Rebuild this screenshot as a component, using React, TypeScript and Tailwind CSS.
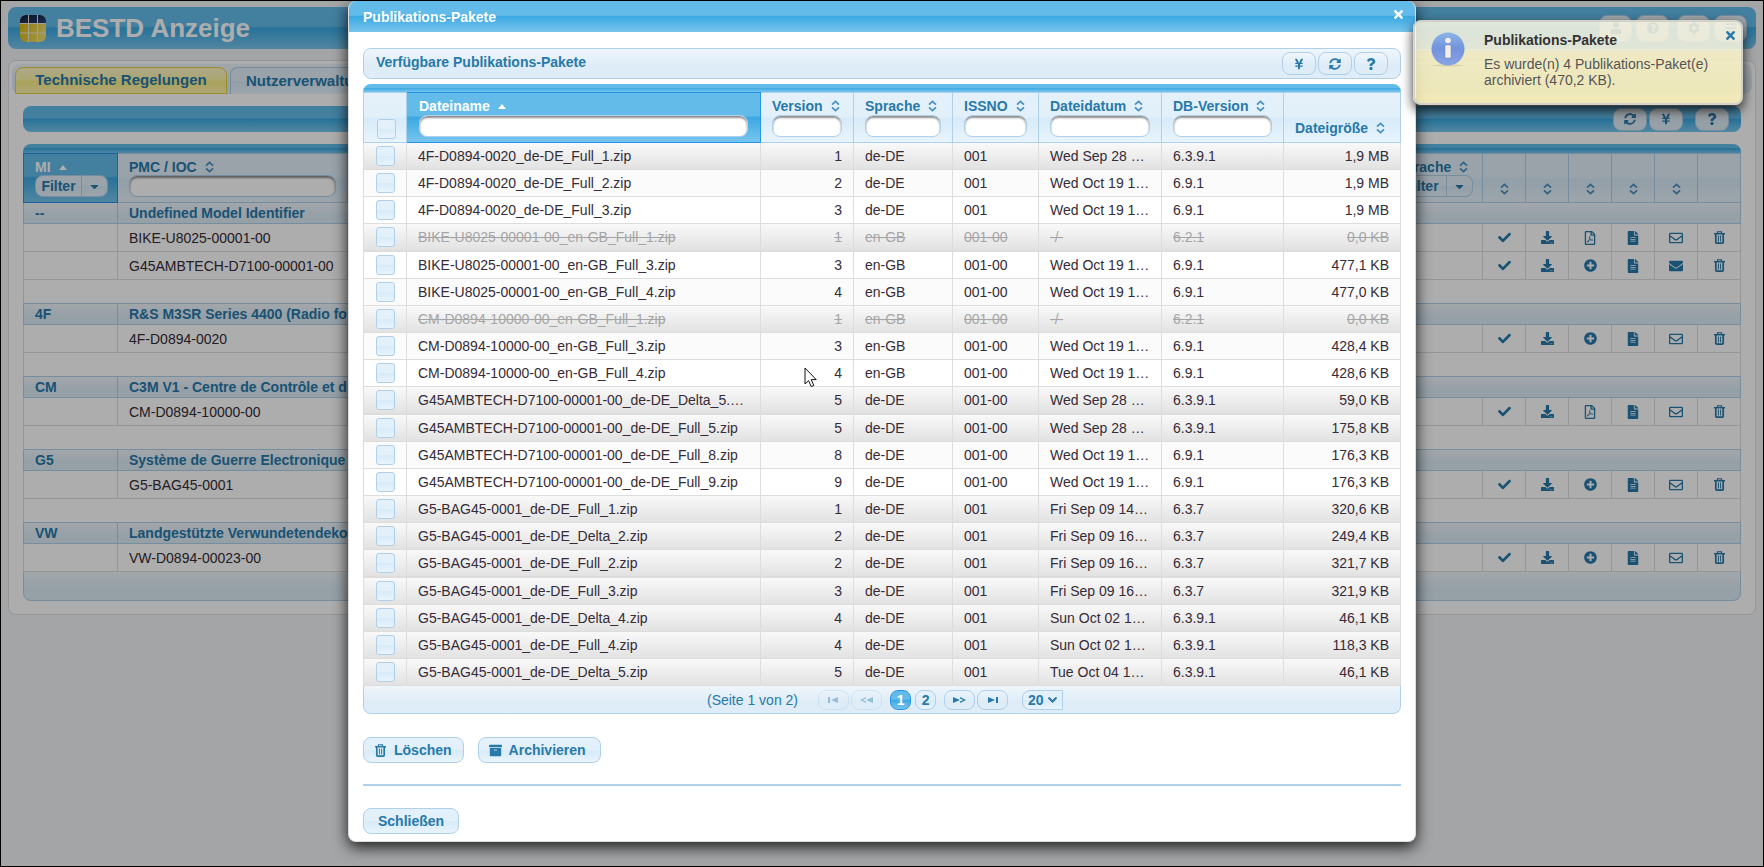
import type { ReactNode } from 'react';
import {
  FaArchive,
  FaBars,
  FaCaretDown,
  FaCheck,
  FaCog,
  FaDownload,
  FaEnvelope,
  FaFileAlt,
  FaPlusCircle,
  FaQuestion,
  FaQuestionCircle,
  FaRegEnvelope,
  FaRegFilePdf,
  FaSyncAlt,
  FaTimes,
  FaUser,
  FaYenSign,
} from 'react-icons/fa';

// ---------------- shared surface styles ----------------
const activeBg = 'bg-[linear-gradient(#63bbea_0%,#63bbea_46%,#3ba9e2_50%,#78c5ed_100%)]';
const defaultBg = 'bg-[linear-gradient(#e4f1fb_0%,#e2f0fa_48%,#d7ebf9_52%,#e8f4fc_100%)]';
const headerBg = 'bg-[linear-gradient(#eff6fb_0%,#deecf7_60%,#deedf7_100%)]';
const oldRowBg = 'bg-[linear-gradient(#f9f9f9,#e2e2e2)]';
const inputCls =
  'block h-[22px] w-full rounded-lg border border-[#aed0ea] bg-white px-2 shadow-[inset_0_2px_2px_#8f8f8f] outline-none';

const SortIcon = () => (
  <svg width="9" height="12" viewBox="0 0 9 12" fill="none" stroke="#4a90bf" strokeWidth="1.8" aria-hidden="true">
    <path d="M1 4.6 4.5 1.4 8 4.6" />
    <path d="M1 7.4 4.5 10.6 8 7.4" />
  </svg>
);

const SortUp = () => (
  <svg width="8" height="5" viewBox="0 0 8 5" fill="#fff" aria-hidden="true">
    <path d="M0 5 4 0 8 5z" />
  </svg>
);

const TrashIcon = () => (
  <svg width="11" height="13" viewBox="0 0 11 13" fill="none" stroke="currentColor" aria-hidden="true">
    <path d="M3.500 2V.7h4V2" strokeWidth="1.100" />
    <path d="M0 2.700h11" strokeWidth="1.500" />
    <path d="M1.800 3v8.200q0 .9.900.9h5.600q.9 0 .9-.9V3" strokeWidth="1.700" />
    <path d="M4.400 4.500v6M6.600 4.500v6" strokeWidth="1" />
  </svg>
);

const IconButton = ({ label, wide, children }: { label: string; wide?: boolean; children: ReactNode }) => (
  <button
    aria-label={label}
    className={`flex items-center justify-center rounded-lg border border-[#aed0ea] text-[12px] text-[#2779aa] ${headerBg} ${
      wide ? 'h-[27px] w-[33px]' : 'h-[23px] w-[34px]'
    }`}
  >
    {children}
  </button>
);

const FilterButton = ({ label, wide }: { label: string; wide?: boolean }) => (
  <div className={`flex h-[22px] ${wide ? 'w-[77px]' : 'w-[73px]'}`}>
    <button className={`flex-1 rounded-l-lg border border-[#aed0ea] font-bold leading-4 text-[#2779aa] ${defaultBg}`}>
      Filter
    </button>
    <button
      aria-label={label}
      className={`flex w-[26px] items-center justify-center rounded-r-lg border border-l-0 border-[#aed0ea] text-[13px] text-[#2779aa] ${defaultBg}`}
    >
      <FaCaretDown />
    </button>
  </div>
);

// ---------------- data of the main table ----------------
type Item = { name: string; pdf?: boolean; sent?: boolean };

const groups: { mi: string; title: string; items: Item[] }[] = [
  {
    mi: '--',
    title: 'Undefined Model Identifier',
    items: [
      { name: 'BIKE-U8025-00001-00', pdf: true },
      { name: 'G45AMBTECH-D7100-00001-00', sent: true },
    ],
  },
  { mi: '4F', title: 'R&S M3SR Series 4400 (Radio fo', items: [{ name: '4F-D0894-0020' }] },
  { mi: 'CM', title: 'C3M V1 - Centre de Contrôle et d', items: [{ name: 'CM-D0894-10000-00', pdf: true }] },
  { mi: 'G5', title: 'Système de Guerre Electronique', items: [{ name: 'G5-BAG45-0001' }] },
  { mi: 'VW', title: 'Landgestützte Verwundetendeko', items: [{ name: 'VW-D0894-00023-00' }] },
];

// ---------------- data of the package table ----------------
type Pack = {
  file: string;
  version: number;
  lang: string;
  issno: string;
  date: string;
  db: string;
  size: string;
  old?: boolean;
  removed?: boolean;
};

const g45 = 'G45AMBTECH-D7100-00001-00_de-DE_';
const g5 = 'G5-BAG45-0001_de-DE_';

const packs: Pack[] = [
  { file: '4F-D0894-0020_de-DE_Full_1.zip', version: 1, lang: 'de-DE', issno: '001', date: 'Wed Sep 28 …', db: '6.3.9.1', size: '1,9 MB', old: true },
  { file: '4F-D0894-0020_de-DE_Full_2.zip', version: 2, lang: 'de-DE', issno: '001', date: 'Wed Oct 19 1…', db: '6.9.1', size: '1,9 MB' },
  { file: '4F-D0894-0020_de-DE_Full_3.zip', version: 3, lang: 'de-DE', issno: '001', date: 'Wed Oct 19 1…', db: '6.9.1', size: '1,9 MB' },
  { file: 'BIKE-U8025-00001-00_en-GB_Full_1.zip', version: 1, lang: 'en-GB', issno: '001-00', date: '-/-', db: '6.2.1', size: '0,0 KB', old: true, removed: true },
  { file: 'BIKE-U8025-00001-00_en-GB_Full_3.zip', version: 3, lang: 'en-GB', issno: '001-00', date: 'Wed Oct 19 1…', db: '6.9.1', size: '477,1 KB' },
  { file: 'BIKE-U8025-00001-00_en-GB_Full_4.zip', version: 4, lang: 'en-GB', issno: '001-00', date: 'Wed Oct 19 1…', db: '6.9.1', size: '477,0 KB' },
  { file: 'CM-D0894-10000-00_en-GB_Full_1.zip', version: 1, lang: 'en-GB', issno: '001-00', date: '-/-', db: '6.2.1', size: '0,0 KB', old: true, removed: true },
  { file: 'CM-D0894-10000-00_en-GB_Full_3.zip', version: 3, lang: 'en-GB', issno: '001-00', date: 'Wed Oct 19 1…', db: '6.9.1', size: '428,4 KB' },
  { file: 'CM-D0894-10000-00_en-GB_Full_4.zip', version: 4, lang: 'en-GB', issno: '001-00', date: 'Wed Oct 19 1…', db: '6.9.1', size: '428,6 KB' },
  { file: g45 + 'Delta_5.…', version: 5, lang: 'de-DE', issno: '001-00', date: 'Wed Sep 28 …', db: '6.3.9.1', size: '59,0 KB', old: true },
  { file: g45 + 'Full_5.zip', version: 5, lang: 'de-DE', issno: '001-00', date: 'Wed Sep 28 …', db: '6.3.9.1', size: '175,8 KB', old: true },
  { file: g45 + 'Full_8.zip', version: 8, lang: 'de-DE', issno: '001-00', date: 'Wed Oct 19 1…', db: '6.9.1', size: '176,3 KB' },
  { file: g45 + 'Full_9.zip', version: 9, lang: 'de-DE', issno: '001-00', date: 'Wed Oct 19 1…', db: '6.9.1', size: '176,3 KB' },
  { file: g5 + 'Full_1.zip', version: 1, lang: 'de-DE', issno: '001', date: 'Fri Sep 09 14…', db: '6.3.7', size: '320,6 KB', old: true },
  { file: g5 + 'Delta_2.zip', version: 2, lang: 'de-DE', issno: '001', date: 'Fri Sep 09 16…', db: '6.3.7', size: '249,4 KB', old: true },
  { file: g5 + 'Full_2.zip', version: 2, lang: 'de-DE', issno: '001', date: 'Fri Sep 09 16…', db: '6.3.7', size: '321,7 KB', old: true },
  { file: g5 + 'Full_3.zip', version: 3, lang: 'de-DE', issno: '001', date: 'Fri Sep 09 16…', db: '6.3.7', size: '321,9 KB', old: true },
  { file: g5 + 'Delta_4.zip', version: 4, lang: 'de-DE', issno: '001', date: 'Sun Oct 02 1…', db: '6.3.9.1', size: '46,1 KB', old: true },
  { file: g5 + 'Full_4.zip', version: 4, lang: 'de-DE', issno: '001', date: 'Sun Oct 02 1…', db: '6.3.9.1', size: '118,3 KB', old: true },
  { file: g5 + 'Delta_5.zip', version: 5, lang: 'de-DE', issno: '001', date: 'Tue Oct 04 1…', db: '6.3.9.1', size: '46,1 KB', old: true },
];

const filterColumns = ['Version', 'Sprache', 'ISSNO', 'Dateidatum', 'DB-Version'];

// ---------------- page behind the dialog ----------------
const Logo = () => (
  <svg width="26" height="27" viewBox="0 0 26 27" aria-hidden="true">
    <defs>
      <linearGradient id="logoNavy" x1="0" y1="0" x2="1" y2="1">
        <stop offset="0" stopColor="#0d1a3f" />
        <stop offset="1" stopColor="#2b4170" />
      </linearGradient>
      <linearGradient id="logoYellow" x1="0" y1="0" x2="1" y2="0.4">
        <stop offset="0" stopColor="#d9b300" />
        <stop offset="1" stopColor="#efdc6c" />
      </linearGradient>
      <clipPath id="logoClip">
        <rect width="26" height="27" rx="6" />
      </clipPath>
    </defs>
    <g clipPath="url(#logoClip)">
      <rect width="26" height="27" fill="url(#logoYellow)" />
      <rect width="26" height="8" fill="url(#logoNavy)" />
      <path d="M0 8.5H26M0 18H26M8.500 0V27M17.500 0V27" stroke="#f3ecd0" strokeWidth="1" />
    </g>
  </svg>
);

const PageHeader = () => (
  <header className={`flex h-[42px] items-center rounded-lg pr-[9px] pl-3 ${activeBg}`}>
    <Logo />
    <h1 className="ml-[10px] text-[26px] font-bold leading-8 text-white">BESTD Anzeige</h1>
    <div className="ml-auto flex gap-1">
      <IconButton label="Benutzer" wide><FaUser /></IconButton>
      <IconButton label="Hilfe" wide><FaQuestionCircle /></IconButton>
      <span className="w-0" />
      <IconButton label="Einstellungen" wide><FaCog /></IconButton>
      <IconButton label="Menü" wide><FaBars /></IconButton>
    </div>
  </header>
);

const MainTable = () => {
  const iconCell = 'border-r border-b border-[#dddddd] p-0 first:border-l';
  const headCell = `border-t border-r border-b border-[#aed0ea] px-[11px] py-0 text-left ${defaultBg}`;
  const headLabel = 'mt-[5px] flex items-center gap-2 leading-4';

  return (
    <div className="mt-3">
      <div className={`h-[9px] rounded-t-lg ${activeBg}`} />
      <table className="w-full table-fixed border-separate border-spacing-0 leading-5">
        <colgroup>
          <col className="w-[95px]" />
          <col className="w-[230px]" />
          <col />
          <col className="w-[98px]" />
          {[0, 1, 2, 3, 4, 5].map((n) => (
            <col key={n} className="w-[43px]" />
          ))}
        </colgroup>
        <thead>
          <tr className="h-[50px] align-top">
            <th className={`border border-[#2694e8] px-[11px] py-0 text-left text-white ${activeBg}`}>
              <div className={headLabel}>MI <SortUp /></div>
              <FilterButton label="MI Filter wählen" />
            </th>
            <th className={headCell}>
              <label htmlFor="pmc" className={`text-[#2779aa] ${headLabel}`}>
                PMC / IOC <SortIcon />
              </label>
              <input id="pmc" className={inputCls} />
            </th>
            <th className={headCell} />
            <th className={headCell}>
              <div className={`text-[#2779aa] ${headLabel}`}>Sprache <SortIcon /></div>
              <FilterButton label="Sprache Filter wählen" wide />
            </th>
            {[0, 1, 2, 3, 4].map((n) => (
              <th key={n} className={headCell}>
                <div className="flex justify-center pt-[29px]"><SortIcon /></div>
              </th>
            ))}
            <th className={headCell} />
          </tr>
        </thead>
        {groups.map((group, g) => (
          <tbody key={group.mi} className="text-[#362b36]">
            <tr className="h-[21px] font-bold text-[#2779aa]">
              <td className={`border-x border-b border-[#aed0ea] px-[11px] py-0 ${headerBg}`}>{group.mi}</td>
              <td colSpan={9} className={`border-r border-b border-[#aed0ea] px-[11px] py-0 ${headerBg}`}>
                {group.title}
              </td>
            </tr>
            {group.items.map((item) => (
              <tr key={item.name} className="h-7">
                <td className={iconCell} />
                <td className="border-r border-b border-[#dddddd] px-[11px] py-0">{item.name}</td>
                <td className={iconCell} />
                <td className={iconCell} />
                {[
                  <FaCheck size={13} />,
                  <FaDownload size={13} />,
                  item.pdf ? <FaRegFilePdf size={14} /> : <FaPlusCircle size={13} />,
                  <FaFileAlt size={14} />,
                  item.sent ? <FaEnvelope size={14} /> : <FaRegEnvelope size={14} />,
                  <TrashIcon />,
                ].map((icon, n) => (
                  <td key={n} className={iconCell}>
                    <div className="flex justify-center text-[#2779aa]">{icon}</div>
                  </td>
                ))}
              </tr>
            ))}
            {g < groups.length - 1 && (
              <tr className="h-6">
                <td colSpan={10} className="border-x border-b border-x-[#dddddd] border-b-[#aed0ea] p-0" />
              </tr>
            )}
          </tbody>
        ))}
      </table>
      <div className={`h-[29px] rounded-b-lg border border-t-0 border-[#aed0ea] ${headerBg}`} />
    </div>
  );
};

// ---------------- dialog ----------------
const Paginator = () => {
  const nav = 'h-5 w-[31px] rounded-lg border border-[#aed0ea] flex items-center justify-center';

  return (
    <div
      className={`flex h-7 items-center justify-center rounded-b-lg border border-t-0 border-[#aed0ea] pl-[6px] leading-4 text-[#2779aa] ${headerBg}`}
    >
      <span className="mr-5">(Seite 1 von 2)</span>
      <div className="flex gap-[2px]">
        <button disabled aria-label="Erste Seite" className={`${nav} opacity-40`}>
          <svg width="11" height="6" viewBox="0 0 11 6" fill="currentColor"><path d="M0 0h2v6H0zM10 0v6L3 3z" /></svg>
        </button>
        <button disabled aria-label="Vorherige Seite" className={`${nav} opacity-40`}>
          <svg width="13" height="6" viewBox="0 0 13 6" fill="currentColor"><path d="M13 0v6L6 3zM6 0v1.500L2.500 3 6 4.500V6L0 3z" /></svg>
        </button>
      </div>
      <div className="mx-2 flex gap-1 font-bold">
        <button className={`h-5 w-[21px] rounded-lg border border-[#2694e8] text-white ${activeBg}`}>1</button>
        <button className={`h-5 w-[21px] rounded-lg border border-[#aed0ea] ${defaultBg}`}>2</button>
      </div>
      <div className="flex gap-[2px]">
        <button aria-label="Nächste Seite" className={nav}>
          <svg width="13" height="6" viewBox="0 0 13 6" fill="currentColor"><path d="M0 0v6L7 3zM7 0v1.500L10.500 3 7 4.500V6L13 3z" /></svg>
        </button>
        <button aria-label="Letzte Seite" className={nav}>
          <svg width="11" height="6" viewBox="0 0 11 6" fill="currentColor"><path d="M9 0h2v6H9zM1 0v6L8 3z" /></svg>
        </button>
      </div>
      <div className="relative ml-[14px]">
        <select
          aria-label="Zeilen pro Seite"
          className={`block h-5 w-[41px] appearance-none rounded-l-lg border border-[#aed0ea] pl-[5px] font-bold leading-4 outline-none ${defaultBg}`}
        >
          <option>20</option>
        </select>
        <svg
          className="pointer-events-none absolute top-[7px] right-[6px]"
          width="9"
          height="6"
          viewBox="0 0 9 6"
          fill="none"
          stroke="#2779aa"
          strokeWidth="2"
        >
          <path d="M.5.5 4.500 4.500 8.500.5" />
        </svg>
      </div>
    </div>
  );
};

const PackageTable = () => {
  const th = `border-t border-r border-b border-[#aed0ea] p-0 text-left ${defaultBg}`;
  const checkbox = `block h-5 w-[19px] appearance-none rounded-[3px] border border-[#aed0ea] ${defaultBg}`;

  return (
    <div className="mt-[5px]">
      <div className={`h-2 rounded-t-lg ${activeBg}`} />
      <table className="w-full table-fixed border-separate border-spacing-0 leading-4">
        <colgroup>
          <col className="w-[44px]" />
          <col className="w-[354px]" />
          <col className="w-[93px]" />
          <col className="w-[99px]" />
          <col className="w-[86px]" />
          <col className="w-[123px]" />
          <col className="w-[122px]" />
          <col />
        </colgroup>
        <thead>
          <tr className="h-[51px] align-top">
            <th className={`border-l ${th}`}>
              <input type="checkbox" aria-label="Alle auswählen" className={`mt-[26px] ml-[13px] ${checkbox}`} />
            </th>
            <th className={`border border-l-0 border-[#2694e8] px-3 py-0 text-left text-white ${activeBg}`}>
              <label htmlFor="dateiname" className="mt-[5px] flex items-center gap-2">
                Dateiname <SortUp />
              </label>
              <input id="dateiname" className={`mt-px ${inputCls}`} />
            </th>
            {filterColumns.map((name) => (
              <th key={name} className={th}>
                <div className="px-[11px]">
                  <label htmlFor={name} className="mt-[5px] flex items-center gap-2 text-[#2779aa]">
                    {name} <SortIcon />
                  </label>
                  <input id={name} className={`mt-px ${inputCls}`} />
                </div>
              </th>
            ))}
            <th className={th}>
              <div className="mt-[27px] ml-[11px] flex items-center gap-2 text-[#2779aa]">
                Dateigröße <SortIcon />
              </div>
            </th>
          </tr>
        </thead>
        <tbody>
          {packs.map((pack, i) => {
            const bg = pack.old ? oldRowBg : i % 2 ? 'bg-[#fbfbfb]' : 'bg-white';
            const edge = i % 6 === 3 ? 'border-b-2' : 'border-b';
            const cell = `whitespace-nowrap border-r ${edge} border-[#dddddd] px-[11px] py-0 ${bg} ${
              pack.removed ? 'text-[#a5a5a5] line-through' : 'text-[#362b36]'
            }`;
            return (
              <tr key={pack.file} className={i % 6 === 3 ? 'h-7' : 'h-[27px]'}>
                <td className={`border-r border-l ${edge} border-[#dddddd] p-0 ${bg}`}>
                  <input type="checkbox" aria-label={pack.file} className={`ml-3 ${checkbox}`} />
                </td>
                <td className={cell}>{pack.file}</td>
                <td className={`text-right ${cell}`}>{pack.version}</td>
                <td className={cell}>{pack.lang}</td>
                <td className={cell}>{pack.issno}</td>
                <td className={cell}>{pack.date}</td>
                <td className={cell}>{pack.db}</td>
                <td className={`text-right ${cell}`}>{pack.size}</td>
              </tr>
            );
          })}
        </tbody>
      </table>
      <Paginator />
    </div>
  );
};

const PackageDialog = () => {
  const button = `flex h-[26px] items-center rounded-lg border border-[#aed0ea] font-bold leading-4 text-[#2779aa] ${defaultBg}`;

  return (
    <section
      role="dialog"
      aria-label="Publikations-Pakete"
      className="w-[1068px] overflow-hidden rounded-lg border-x border-b border-[#dddddd] bg-white shadow-[0_5px_15px_rgba(0,0,0,0.85)]"
    >
      <div className={`flex h-[31px] items-center justify-between px-[14px] ${activeBg}`}>
        <h2 className="font-bold leading-4 text-white">Publikations-Pakete</h2>
        <button aria-label="Schließen" className="mr-[-4px] mb-1 text-[13px] text-white"><FaTimes /></button>
      </div>

      <div className="px-[14px] pt-4 pb-[7px]">
        <div
          className={`flex h-[31px] items-center justify-between rounded-lg border border-[#aed0ea] px-3 ${headerBg}`}
        >
          <h3 className="mb-[3px] font-bold leading-4 text-[#2779aa]">Verfügbare Publikations-Pakete</h3>
          <div className="flex gap-[2px]">
            <IconButton label="Export"><FaYenSign /></IconButton>
            <IconButton label="Aktualisieren"><FaSyncAlt /></IconButton>
            <IconButton label="Hilfe"><FaQuestion /></IconButton>
          </div>
        </div>

        <PackageTable />

        <div className="mt-[23px] flex gap-[14px]">
          <button className={`gap-2 px-[11px] ${button}`}><TrashIcon />Löschen</button>
          <button className={`gap-[7px] pr-[14px] pl-[10px] ${button}`}><FaArchive size={13} />Archivieren</button>
        </div>

        <hr className="mt-[21px] mb-[22px] border-t-2 border-[#aed0ea]" />

        <button className={`px-[14px] ${button}`}>Schließen</button>
      </div>
    </section>
  );
};

const Growl = () => (
  <div
    role="status"
    className="absolute top-[19px] right-5 flex h-[85px] w-[330px] rounded-lg border-2 border-[#cccccc]/80 bg-[linear-gradient(#faf8e6d9_0%,#faf7e0d9_34%,#fcf5cad9_36%,#fcf3b8d9_100%)] pt-[10px] pl-4 leading-4 shadow-[0_5px_12px_rgba(0,0,0,0.8)]"
  >
    <svg width="36" height="36" viewBox="0 0 36 36" aria-hidden="true">
      <defs>
        <linearGradient id="info" x1="0" y1="0" x2="0" y2="1">
          <stop offset="0" stopColor="#8cb4e8" />
          <stop offset="0.5" stopColor="#7293dc" />
          <stop offset="1" stopColor="#88a4e2" />
        </linearGradient>
      </defs>
      <ellipse cx="17" cy="33.500" rx="16" ry="1.200" fill="#dcd6b0" />
      <circle cx="17" cy="17" r="16.500" fill="url(#info)" />
      <circle cx="17" cy="8.500" r="2.800" fill="#f4f0e6" />
      <path d="M14 13h6v13h-6z" fill="#f4f0e6" stroke="#6a7fc0" strokeWidth=".5" />
    </svg>
    <div className="ml-[17px] text-[#333333]">
      <p className="font-bold">Publikations-Pakete</p>
      <p className="mt-2 w-[236px] text-[#555555]">Es wurde(n) 4 Publikations-Paket(e) archiviert (470,2 KB).</p>
    </div>
    <button aria-label="Meldung schließen" className="absolute top-[7px] right-1 text-[13px] text-[#2779aa]">
      <FaTimes />
    </button>
  </div>
);

export default function App() {
  return (
    <div className="relative min-h-screen overflow-hidden border border-black bg-[#f2f3f5] font-['Liberation_Sans',Arial,sans-serif] text-[14px]">
      <div className="px-[7px] pt-[6px]">
        <PageHeader />

        <main className="mt-[11px] rounded-lg border border-[#dddddd] bg-white px-[3px] pt-[3px] pb-[13px]">
          <nav className={`flex h-[30px] gap-[3px] rounded-lg pt-[3px] pl-[3px] text-[15px] font-bold ${headerBg}`}>
            <a
              href="#regelungen"
              className="flex w-[212px] items-center justify-center rounded-t-lg border border-[#e5cf3c] bg-[linear-gradient(#fff9c8_0%,#fdf5a8_48%,#fbef84_52%,#fff6b0_100%)] text-[#2779aa]"
            >
              Technische Regelungen
            </a>
            <a
              href="#nutzer"
              className={`flex items-center rounded-t-lg border border-b-0 border-[#aed0ea] px-[15px] text-[#2779aa] ${defaultBg}`}
            >
              Nutzerverwaltung
            </a>
          </nav>

          <div className="mt-3 px-[11px]">
            <div className={`flex h-[26px] items-center justify-end gap-[2px] rounded-lg px-3 ${activeBg}`}>
              <IconButton label="Aktualisieren"><FaSyncAlt /></IconButton>
              <IconButton label="Export"><FaYenSign /></IconButton>
              <span className="w-2" />
              <IconButton label="Hilfe"><FaQuestion /></IconButton>
            </div>
            <MainTable />
          </div>
        </main>
      </div>

      {/* modal layer over the page */}
      <div className="absolute inset-0 flex items-start justify-center bg-black/32">
        <PackageDialog />
        <svg className="absolute top-[366px] left-[803px]" width="14" height="21" viewBox="0 0 14 21" aria-hidden="true">
          <path
            d="M1 1v16l3.600-3.400 2.600 6 2.600-1.100-2.600-5.900h5z"
            fill="#fff"
            stroke="#111"
            strokeWidth="1"
          />
        </svg>
        <Growl />
      </div>
    </div>
  );
}
